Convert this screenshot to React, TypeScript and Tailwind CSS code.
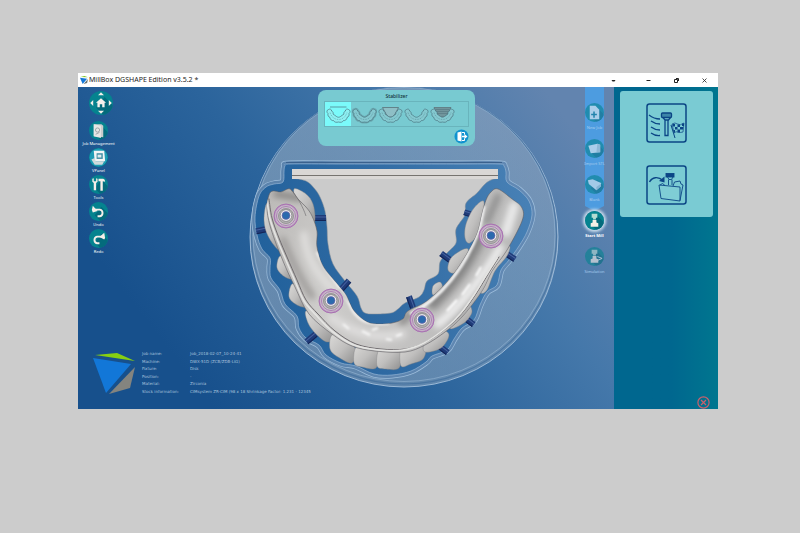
import type { ReactNode } from "react";

type Point = [number, number];

/** Smooth closed or open curve through a list of points (Catmull-Rom). */
function curve(points: Point[], closed = true): string {
  const n = points.length;
  const at = (i: number): Point =>
    closed ? points[(i + n) % n] : points[Math.max(0, Math.min(n - 1, i))];
  let d = `M${points[0][0]} ${points[0][1]}`;
  const last = closed ? n : n - 1;
  for (let i = 0; i < last; i++) {
    const [a, b, c, e] = [at(i - 1), at(i), at(i + 1), at(i + 2)];
    d += `C${b[0] + (c[0] - a[0]) / 6} ${b[1] + (c[1] - a[1]) / 6} ${c[0] - (e[0] - b[0]) / 6} ${c[1] - (e[1] - b[1]) / 6} ${c[0]} ${c[1]}`;
  }
  return closed ? d + "Z" : d;
}

const pocket = curve([
  [284, 171], [285, 166], [290, 164], [340, 164], [400, 164], [460, 164], [499, 164], [504, 166], [506, 172],
  [507, 182], [519, 190], [529, 201], [532, 215], [527, 232], [519, 246], [509, 260], [501, 270], [497, 285],
  [487, 292], [480, 305], [474, 320], [462, 328], [454, 339], [447, 350], [432, 356], [426, 362],
  [411, 371], [392, 375], [374, 374], [356, 366], [341, 363], [326, 355], [319, 345], [306, 338], [299, 328],
  [297, 316], [285, 304], [280, 290], [271, 278], [270, 268], [270, 258], [262, 249], [257, 235],
  [255, 217], [259, 196], [266, 187], [274, 184], [283, 182],
]);

const plate =
  "M292 178" +
  curve([
    [292, 178], [306, 181], [314, 188], [320, 197], [325, 211], [327, 227], [328, 244], [333, 264], [345, 281], [357, 296],
    [361, 308], [365, 313], [374, 314], [391, 313], [398, 309], [405, 303], [419, 297], [424, 290],
    [427, 281], [438, 274], [440, 262], [447, 253], [456, 243], [456, 229], [465, 215], [466, 203],
    [477, 193], [485, 184], [491, 180], [498, 178],
  ], false).replace(/^M/, "L") +
  "Z";

const arch = curve([
  [269, 195], [273, 191], [281, 192], [290, 189], [298, 199], [306, 207], [312, 216], [317, 231], [317, 247], [323, 266],
  [338, 285], [346, 295], [354, 311], [367, 322], [380, 324], [392, 323], [403, 319], [408, 311], [427, 301],
  [448, 281], [465, 257], [477, 234], [482, 214], [486, 200], [491, 192], [498, 189], [512, 199], [522, 208],
  [522, 221], [507, 250], [492, 271], [482, 291], [462, 317], [445, 332], [425, 345], [405, 352],
  [375, 351], [352, 346], [332, 334], [309, 314], [295, 287], [283, 261], [271, 229], [267, 209],
]);

const ridge = curve([
  [268, 199], [271, 218], [278, 238], [286, 257], [296, 280], [305, 300], [317, 314], [334, 331], [355, 344],
  [380, 349], [404, 349], [425, 342], [448, 326], [462, 312], [475, 294], [486, 276], [498, 257],
], false);

const teeth: Point[][] = [
  [[294, 189], [306, 194], [313, 204], [315, 219], [311, 225], [298, 205]],
  [[267, 203], [264, 220], [268, 236], [279, 250], [284, 240], [275, 210]],
  [[280, 256], [277, 268], [285, 277], [293, 278], [288, 262]],
  [[292, 284], [289, 297], [297, 305], [306, 306], [300, 290]],
  [[306, 311], [308, 323], [316, 334], [327, 342], [335, 336], [320, 318]],
  [[332, 335], [330, 349], [338, 357], [352, 363], [356, 350], [345, 338]],
  [[356, 347], [354, 363], [362, 367], [376, 368], [379, 352], [368, 344]],
  [[379, 349], [377, 366], [386, 369], [399, 368], [401, 352], [390, 345]],
  [[401, 348], [401, 366], [411, 364], [423, 359], [425, 348], [412, 342]],
  [[425, 342], [425, 352], [441, 348], [449, 335], [440, 330]],
  [[450, 328], [464, 323], [472, 312], [466, 305]],
  [[481, 291], [487, 290], [495, 271], [507, 256], [509, 246], [492, 262]],
  [[484, 202], [474, 208], [466, 224], [465, 238], [470, 243], [480, 230]],
  [[464, 249], [451, 258], [448, 270], [456, 272], [468, 252]],
  [[440, 282], [433, 286], [433, 295], [442, 288]],
];

const pins: [number, number, number][] = [
  [262, 230, -12], [320, 218, 0], [470, 214, 17], [446, 257, 36], [510, 256, 34],
  [345, 285, -48], [311, 338, -40], [411, 302, 70], [469, 321, 38], [443, 349, 38],
];

const implants: Point[] = [[286, 216], [331, 301], [422, 320], [491, 236]];

function ModelCanvas() {
  return (
    <svg className="absolute inset-0 h-full w-full" viewBox="78 87 536 322" role="img" aria-label="Milling disc with denture">
      <defs>
        <linearGradient id="sky" gradientUnits="userSpaceOnUse" x1="200" y1="390" x2="560" y2="110">
          <stop offset="0" stopColor="#17508c" />
          <stop offset="0.4" stopColor="#2b649c" />
          <stop offset="0.72" stopColor="#4578aa" />
          <stop offset="1" stopColor="#6284af" />
        </linearGradient>
        <linearGradient id="pocketFill" gradientUnits="userSpaceOnUse" x1="255" y1="300" x2="535" y2="240">
          <stop offset="0" stopColor="#20609b" />
          <stop offset="0.5" stopColor="#326ca4" />
          <stop offset="1" stopColor="#4780b5" />
        </linearGradient>
        <linearGradient id="disc" gradientUnits="userSpaceOnUse" x1="250" y1="240" x2="558" y2="230">
          <stop offset="0" stopColor="#c3c9d0" stopOpacity="0.42" />
          <stop offset="1" stopColor="#c3c9d0" stopOpacity="0.28" />
        </linearGradient>
        <linearGradient id="rim" gradientUnits="userSpaceOnUse" x1="255" y1="240" x2="535" y2="230">
          <stop offset="0" stopColor="#5b83ac" />
          <stop offset="1" stopColor="#6289b4" />
        </linearGradient>
        <linearGradient id="tooth" x1="0" y1="0" x2="1" y2="1">
          <stop offset="0" stopColor="#dbdad8" />
          <stop offset="0.5" stopColor="#c0bfbe" />
          <stop offset="1" stopColor="#8e8e8e" />
        </linearGradient>
        <linearGradient id="gum" gradientUnits="userSpaceOnUse" x1="270" y1="200" x2="520" y2="290">
          <stop offset="0" stopColor="#bdbbb9" />
          <stop offset="0.3" stopColor="#cdccca" />
          <stop offset="0.6" stopColor="#c6c5c4" />
          <stop offset="1" stopColor="#b4b4b4" />
        </linearGradient>
        <filter id="soft" x="-20%" y="-20%" width="140%" height="140%">
          <feGaussianBlur stdDeviation="3" />
        </filter>
        <filter id="fine" x="-20%" y="-20%" width="140%" height="140%">
          <feGaussianBlur stdDeviation="1" />
        </filter>
        <clipPath id="archClip">
          <path d={arch} />
        </clipPath>
      </defs>

      <rect x="-400" y="87" width="1400" height="322" fill="url(#sky)" />
      <ellipse cx="404" cy="237" rx="154" ry="150" fill="url(#disc)" stroke="#a7c2dc" strokeWidth="0.9" />
      <ellipse cx="404" cy="235.500" rx="152.500" ry="148.500" fill="none" stroke="#44719f" strokeOpacity="0.8" strokeWidth="1.200" />
      <ellipse cx="404" cy="234.500" rx="151" ry="147" fill="none" stroke="#8fb0d0" strokeWidth="0.7" />

      <path d={pocket} fill="none" stroke="#9dbddb" strokeWidth="7" />
      <path d={pocket} fill="none" stroke="url(#rim)" strokeWidth="5.600" />
      <path d={pocket} fill="url(#pocketFill)" stroke="#93b5d5" strokeWidth="0.7" />
      <path d="M286 162.500H502" stroke="#3b618d" strokeWidth="1" />

      <path d={plate} fill="#cbcbcb" stroke="#8d9097" strokeWidth="0.5" />
      <rect x="292" y="169" width="206" height="10" fill="#dad7d5" />
      <path d="M292 175.500H498" stroke="#77736f" strokeWidth="1" />

      {pins.map(([x, y, r]) => (
        <g key={`${x}-${y}`} transform={`translate(${x} ${y}) rotate(${r})`}>
          <rect x="-6" y="-3" width="12" height="6" fill="#1f3b78" />
          <path d="M-6 -1H6" stroke="#4763a0" strokeWidth="1" />
          <path d="M-6 2.500H6" stroke="#132457" strokeWidth="1" />
        </g>
      ))}

      {teeth.map((t, i) => (
        <path key={i} d={curve(t)} fill="url(#tooth)" stroke="#7f7f82" strokeWidth="0.4" />
      ))}
      <path d={arch} fill="url(#gum)" stroke="#5d5a60" strokeWidth="0.6" />
      <g clipPath="url(#archClip)" fill="none" strokeLinecap="round">
        <g filter="url(#soft)">
          <path d="M283 240C292 262 302 282 312 296" stroke="#a09e9c" strokeWidth="7" />
          <path d="M276 194L300 198" stroke="#858381" strokeWidth="6" />
          <path d="M304 235C306 258 318 276 334 290" stroke="#dedddb" strokeWidth="8" />
          <path d="M332 318C360 338 385 338 402 334" stroke="#dddcdb" strokeWidth="9" />
          <path d="M433 304C454 284 470 260 481 236" stroke="#858585" strokeWidth="11" />
          <path d="M438 324C456 310 478 284 500 248" stroke="#f0f0f0" strokeWidth="8" />
          <path d="M498 196L487 222" stroke="#8b8b8b" strokeWidth="6" />
          <path d="M490 280C480 298 468 312 452 326" stroke="#a5a5a5" strokeWidth="5" />
          <path d="M514 206L506 232" stroke="#eaeaea" strokeWidth="10" />
          <path d="M402 322L412 312" stroke="#8c8a89" strokeWidth="7" />
        </g>
        <g filter="url(#fine)" strokeLinecap="butt">
          <path d="M343 324L349 329M386 339L392 340M396 336L402 334M362 331L370 335M372 330L378 328" stroke="#f6f6f6" strokeWidth="2" />
          <path d="M447 311L457 300M462 295L470 284M476 276L481 267" stroke="#fff" strokeWidth="2" />
          <path d="M410 314C440 300 466 266 479 230L484 206" stroke="#f6f6f6" strokeWidth="3" />
          <path d="M317 252C326 272 342 288 350 305C356 320 366 325 389 323" stroke="#efeeed" strokeWidth="3" />
          <path d="M339 289L346 298L350 302" stroke="#8f8b8a" strokeWidth="1" />
        </g>
        <path d={ridge} stroke="#6f6b6e" strokeWidth="1" transform="translate(1 0)" />
        <path d={ridge} stroke="#e4e4e2" strokeWidth="1.600" transform="translate(-1 1)" />
      </g>
      <path d="M291 190C297 196 303 207 306 216" fill="none" stroke="#6a686b" strokeWidth="0.6" />

      {implants.map(([x, y]) => (
        <g key={x} transform={`translate(${x} ${y})`}>
          <circle r="11.500" fill="#c9c4c8" stroke="#bb8fc2" strokeWidth="1.500" />
          <circle r="12" fill="none" stroke="#93559f" strokeWidth="0.5" />
          <circle r="9.500" fill="none" stroke="#a46db0" strokeWidth="0.8" />
          <circle r="7.500" fill="#b3b1b3" stroke="#8d8a8d" strokeWidth="0.8" />
          <circle cy="-0.500" r="5.800" fill="#f4f4f4" stroke="#6f6c70" strokeWidth="0.6" />
          <circle cy="-0.500" r="4" fill="#2b6aae" stroke="#7b62a4" strokeWidth="0.6" />
        </g>
      ))}
    </svg>
  );
}

function Disc({ id, children }: { id: string; children: ReactNode }) {
  return (
    <svg className="block h-full w-full" viewBox="0 0 20 20" aria-hidden="true">
      <defs>
        <clipPath id={id}>
          <circle cx="10" cy="10" r="10" />
        </clipPath>
      </defs>
      <circle cx="10" cy="10" r="10" fill="#05838f" />
      <path d="M6 14L13 5L24 16L16 24Z" fill="#046b7c" clipPath={`url(#${id})`} />
      {children}
    </svg>
  );
}

const leftTools: { label: string; icon: ReactNode }[] = [
  {
    label: "Job Management",
    icon: (
      <Disc id="c-job">
        <path d="M5 3.500H13L15 5V17L5 16Z" fill="#c9cdcd" />
        <path d="M5 3.500L12.500 5V18L5 16Z" fill="#e6e7e5" />
        <circle cx="9" cy="9.500" r="2.200" fill="none" stroke="#9aa2a4" />
        <path d="M7 14L11 12" stroke="#9aa2a4" />
      </Disc>
    ),
  },
  {
    label: "VPanel",
    icon: (
      <Disc id="c-panel">
        <circle cx="10" cy="10" r="9.500" fill="#1d9bb5" />
        <path d="M5 3H16L17 14H6Z" fill="#f2f5f5" />
        <path d="M8 5.500H14.500V11.500H8Z" fill="#3f8ea3" />
        <path d="M9 7H13V10H9Z" fill="#dcebee" />
        <path d="M2.500 12L6 10.500L7 14H16L14 17.500H6Z" fill="#cfdadb" />
      </Disc>
    ),
  },
  {
    label: "Tools",
    icon: (
      <Disc id="c-tools">
        <path d="M3.500 4V7L5 8.500V16H7.500V8.500L9 7V4L7.500 3.500V6.500H5V3.500Z" fill="#f5efe9" />
        <path d="M10 4H15Q17 4.500 17 7L14.500 6.500V16.500H12V6.500H10Z" fill="#f5efe9" />
      </Disc>
    ),
  },
  {
    label: "Undo",
    icon: (
      <Disc id="c-undo">
        <path d="M6 8H11.500A3.600 3.600 0 0 1 11.500 15H9" fill="none" stroke="#f5efe9" strokeWidth="2" />
        <path d="M3 8.500L4 4L9 9.500L4 11Z" fill="#f5efe9" />
      </Disc>
    ),
  },
  {
    label: "Redo",
    icon: (
      <Disc id="c-redo">
        <path d="M14 8H8.500A3.600 3.600 0 0 0 8.500 15H11" fill="none" stroke="#f5efe9" strokeWidth="2" />
        <path d="M17 9.500L16 4L11 8.500L16 11Z" fill="#f5efe9" />
      </Disc>
    ),
  },
];

function LeftToolbar() {
  return (
    <nav aria-label="Main tools" className="flex w-[41px] flex-col items-center pt-1">
      <button type="button" aria-label="Home view" className="ml-1 size-6">
        <Disc id="c-home">
          <path d="M10 6L5.800 9.800H7V13.500H9V11H11V13.500H13V9.800H14.200Z" fill="#f5f1ec" />
          <path d="M10 1L12.500 3.500H7.500ZM10 19L12.500 16.500H7.500ZM1 10L3.500 7.500V12.500ZM19 10L16.500 7.500V12.500Z" fill="#f1efea" />
        </Disc>
      </button>
      <div className="mt-1.5 flex flex-col items-center">
        {leftTools.map((t) => (
          <button key={t.label} type="button" className="flex h-[27px] flex-col items-center">
            <span className="block size-[19px]">{t.icon}</span>
            <span className="text-[4px] leading-[8px] whitespace-nowrap text-white">{t.label}</span>
          </button>
        ))}
      </div>
    </nav>
  );
}

const mill = (
  <>
    <path d="M7 3H13V7H11.500V9H8.500V7H7Z" fill="#b4dcd2" />
    <path d="M8 9.500H12V12L14 13V16.500H6V13L8 12Z" fill="#f4efe6" />
  </>
);

const steps: { label: string; dim: boolean; active?: boolean; icon: ReactNode }[] = [
  {
    label: "New Job",
    dim: true,
    icon: (
      <Disc id="c-new">
        <path d="M5 3H11L15 7V17H5Z" fill="#e8f0f2" />
        <path d="M9.500 9V15.500M6.500 12.200H12.500" stroke="#05738a" strokeWidth="1.600" />
      </Disc>
    ),
  },
  {
    label: "Import STL",
    dim: true,
    icon: (
      <Disc id="c-import">
        <path d="M3.500 7L13 5L16 6V14L6 15Z" fill="#e8f0f2" />
        <path d="M13 5L12 14L16 14V6Z" fill="#b9ccd0" />
      </Disc>
    ),
  },
  {
    label: "Blank",
    dim: true,
    icon: (
      <Disc id="c-blank">
        <path d="M3 5.500L8 4.500L17 8.500L16.500 12L12 16L4 9.500Z" fill="#dce9ee" />
        <path d="M17 9L12 12.500V16L16.500 12Z" fill="#a9c2cc" />
      </Disc>
    ),
  },
  { label: "Start Mill", dim: false, active: true, icon: <Disc id="c-mill">{mill}</Disc> },
  {
    label: "Simulation",
    dim: true,
    icon: (
      <Disc id="c-sim">
        {mill}
        <path d="M13 10L18 12L13.500 14" fill="none" stroke="#e8f0f2" />
      </Disc>
    ),
  },
];

function WorkflowBar() {
  return (
    <nav aria-label="Workflow" className="relative mr-[10px] ml-auto w-[19px]">
      <svg className="absolute inset-x-0 top-0 h-[124px] w-full" viewBox="0 0 19 124" preserveAspectRatio="none" aria-hidden="true">
        <path d="M0 0H19V119L9.500 124L0 119Z" fill="#4b9fe5" opacity="0.9" />
      </svg>
      <div className="relative flex flex-col items-center pt-4">
        {steps.map((s) => (
          <button key={s.label} type="button" className="flex h-9 flex-col items-center">
            <span
              className={`block size-[19px] shrink-0 rounded-full ${s.dim ? "opacity-60" : ""} ${
                s.active ? "shadow-[0_0_3px_2px_#c9dcec]" : ""
              }`}
            >
              {s.icon}
            </span>
            <span
              className={`mt-[3px] text-[4px] leading-[6px] whitespace-nowrap ${
                s.active ? "font-bold text-white" : "text-[#a9cdee]"
              }`}
            >
              {s.label}
            </span>
          </button>
        ))}
      </div>
    </nav>
  );
}

const archOutline =
  "M2.500 5.500C0.500 6 0.500 8.500 2 9.500C1.500 11.500 2.500 13 4 13.500C4 15.500 6 17 7.500 16.500C8.500 18.500 10.500 18.500 12.500 18C14.500 18.500 16.500 18.500 17.500 16.500C19 17 21 15.500 21 13.500C22.500 13 23.500 11.500 23 9.500C24.500 8.500 24.500 6 22.500 5.500C21 4.500 19 5.500 19.500 7C18 7.500 17.500 9 18 10C16.500 10.500 16 12 14.500 12.500C13 13.500 12 13.500 10.500 12.500C9 12 8.500 10.500 7 10C7.500 9 7 7.500 5.500 7C6 5.500 4 4.500 2.500 5.500Z";

function ArchIcon({ kind }: { kind: number }) {
  return (
    <svg className="block h-5 w-[25px]" viewBox="0 0 25 20" fill="none" stroke="#4b7480" strokeWidth="0.7" aria-hidden="true">
      {kind === 1 && <path d={archOutline} stroke="#6aaab2" strokeWidth="2.500" />}
      {kind === 2 && <path d="M4.500 3.500H20.500L17 10L14.500 13H10.500L8 10Z" fill="#8ebfc6" stroke="#54666e" />}
      {kind === 4 && (
        <>
          <path d="M4 3.500H21L17 11L14.500 13H10.500L8 11Z" fill="#71959c" stroke="#5b6f76" />
          <path d="M5 5.500H20M6 7.500H19M7 9.500H18" stroke="#557680" strokeWidth="0.6" />
        </>
      )}
      {kind === 0 && <path d="M4 3H20.500" />}
      <path d={archOutline} fill={kind === 0 ? "#8df0f2" : "#84c9d0"} />
      <path d="M4 8.500C5 12 8 15.500 12.500 15.500S20 12 21 8.500" strokeDasharray="1.500 1" strokeWidth="0.4" />
    </svg>
  );
}

const arches = ["Bar", "Offset", "Plate", "Open", "Grid"];

function StabilizerPopup() {
  return (
    <section
      aria-label="Stabilizer"
      className="absolute top-[3px] left-[240px] flex w-[157px] flex-col rounded-lg bg-[#78cad1] px-1.5 pt-1 pb-0.5"
    >
      <h2 className="text-center text-[5px] leading-[5px] font-medium text-[#123038]">Stabilizer</h2>
      <div className="mt-0.5 flex h-[26px] border border-[#69b4bc]">
        {arches.map((a, i) => (
          <button
            key={a}
            type="button"
            aria-label={a}
            className={`flex w-[26px] items-center justify-center ${i === 0 ? "bg-[#7bfafa]" : ""}`}
          >
            <ArchIcon kind={i} />
          </button>
        ))}
      </div>
      <button type="button" aria-label="Exit" className="mt-0.5 size-[15px] self-end">
        <svg className="block size-full" viewBox="0 0 15 15" aria-hidden="true">
          <circle cx="7.500" cy="7.500" r="7" fill="#1193cf" />
          <path d="M3.500 3.500L7.500 2.500V12.500L3.500 11.500Z" fill="#fff" />
          <path d="M8 3.500H10.500V5.500M10.500 9.500V11.500H8" fill="none" stroke="#fff" />
          <path d="M8 6.700H10.500V5L13.500 7.500L10.500 10V8.300H8Z" fill="#fff" />
        </svg>
      </button>
    </section>
  );
}

const info: [string, string][] = [
  ["Job name:", "Job_2018-02-07_10-24-41"],
  ["Machine:", "DWX-51D (ZCB/ZDB-LIG)"],
  ["Fixture:", "Disk"],
  ["Position:", "-"],
  ["Material:", "Zirconia"],
  ["Stock information:", "CIMsystem ZR-CIM (98 x 18 Shrinkage Factor: 1.231 - 12345"],
];

function JobInfo() {
  return (
    <div className="absolute bottom-[14px] left-[15px] flex items-center gap-[5px]">
      <svg className="mt-px h-[43px] w-11" viewBox="0 0 44 43" role="img" aria-label="MillBox">
        <path d="M2 3L24 1L42 9Z" fill="#86cf12" />
        <path d="M0 6L38 12L13 41Z" fill="#1277d8" />
        <path d="M42 15L37 36L16 42Z" fill="#84847f" />
      </svg>
      <dl className="grid h-[45px] grid-cols-[48px_auto] content-between font-['DejaVu_Sans',sans-serif] text-[4px] leading-[7px] text-[#a9c3de]">
        {info.map(([k, v]) => (
          <div key={k} className="contents">
            <dt>{k}</dt>
            <dd className="whitespace-nowrap">{v}</dd>
          </div>
        ))}
      </dl>
    </div>
  );
}

function MillNowIcon() {
  return (
    <svg className="block h-10 w-[41px]" viewBox="0 0 41 40" fill="none" stroke="#0b4585" strokeWidth="1.300" aria-hidden="true">
      <rect x="1" y="1" width="39" height="38" rx="2.500" strokeWidth="1.500" />
      <path d="M3 12Q8 16 14 16M5 18Q9 21 14 21M5 24Q9 27 14 27M5 30Q9 33 14 32.500" />
      <rect x="15.500" y="10" width="10" height="4.500" rx="1" fill="#3d86a8" />
      <path d="M17 14.500L19 17H22.500L24.500 14.500M19 17V32.500H22V17" />
      <path d="M25 22L29 35" strokeWidth="1" />
      <path d="M26 21Q29 19 31.500 21T38 20L37 29Q34 30 32 29T28 30Z" strokeWidth="0.7" />
      <path
        d="M26.500 21H29V23.500H27ZM31.500 21.500H34V24H31.500ZM29 24H31.500V26.500H29ZM34 24H37V26.500H34ZM31.500 26.500H34V29.500H31.500ZM27.500 27H29V29.500H28ZM36 20.500H38V23H36Z"
        fill="#0b4585"
        stroke="none"
      />
    </svg>
  );
}

function SaveMillIcon() {
  return (
    <svg className="block h-10 w-[41px]" viewBox="0 0 41 40" fill="none" stroke="#0b4585" strokeWidth="0.900" aria-hidden="true">
      <rect x="1" y="1" width="39" height="38" rx="2.500" strokeWidth="1.500" />
      <path d="M3.500 17C6 12 12 11 17 15.500" strokeWidth="1.400" />
      <path d="M18.500 11.500V17.500L13 16Z" fill="#0b4585" stroke="none" />
      <rect x="20" y="8.500" width="8" height="3.500" fill="#0b4585" />
      <path d="M21.500 12L23 14.500H25.500L27 12M22.500 14.500V20M26 14.500V20" />
      <path d="M13 20L34 22V36L15 33.500Z" fill="#7fcdd5" />
      <path d="M14 20L16.500 18.500L19 20.500M27 21L28.500 17L34 16L35 19L37 20L34 35.500" />
    </svg>
  );
}

function SidePanel() {
  return (
    <aside className="flex w-[104px] flex-col justify-between bg-linear-to-r from-[#00678f] from-55% to-[#00768f] pt-1 pr-[5px] pl-1.5">
      <div className="flex h-[126px] flex-col items-center justify-center gap-[22px] rounded-[3px] bg-[#7acbd3]">
        <button type="button" aria-label="Mill now">
          <MillNowIcon />
        </button>
        <button type="button" aria-label="Save to folder">
          <SaveMillIcon />
        </button>
      </div>
      <button type="button" aria-label="Cancel" className="mr-[3px] size-[13px] self-end">
        <svg className="block size-full" viewBox="0 0 13 13" fill="none" stroke="#c9606c" strokeWidth="1.200" aria-hidden="true">
          <circle cx="6.500" cy="6.500" r="5.600" />
          <path d="M4 4L9 9M9 4L4 9" />
        </svg>
      </button>
    </aside>
  );
}

function TitleBar() {
  return (
    <header className="flex h-[14px] items-center bg-white pr-[10px] pl-0.5">
      <svg className="size-2" viewBox="0 0 9 9" aria-hidden="true">
        <path d="M0.500 1L5 0L9 1.500Z" fill="#7cc41c" />
        <path d="M0 2L8 3L3 9Z" fill="#1277d8" />
        <path d="M9 3.500L8 8L4 9Z" fill="#64706f" />
      </svg>
      <h1 className="ml-px text-[7px] leading-[14px] whitespace-nowrap text-[#1c1c1c]">
        MillBox DGSHAPE Edition v3.5.2 *
      </h1>
      <div className="ml-auto flex items-center text-[#222]">
        <button type="button" aria-label="Collapse" className="mr-7 size-[7px]">
          <svg className="block size-full" viewBox="0 0 7 7" aria-hidden="true">
            <path d="M1.500 3H5.500L4.500 4.500H2.500Z" fill="currentColor" />
          </svg>
        </button>
        <div className="flex gap-[21px]">
          <button type="button" aria-label="Minimize" className="size-[7px]">
            <svg className="block size-full" viewBox="0 0 7 7" aria-hidden="true">
              <path d="M1.500 3.500H5.500" stroke="currentColor" />
            </svg>
          </button>
          <button type="button" aria-label="Restore" className="size-[7px]">
            <svg className="block size-full" viewBox="0 0 7 7" fill="none" stroke="currentColor" aria-hidden="true">
              <path d="M1.500 2.500H4.500V5.500H1.500ZM3 1.500H5.500V4" />
            </svg>
          </button>
          <button type="button" aria-label="Close" className="size-[7px]">
            <svg className="block size-full" viewBox="0 0 7 7" stroke="currentColor" aria-hidden="true">
              <path d="M1.500 1.500L5.500 5.500M5.500 1.500L1.500 5.500" strokeWidth="0.8" />
            </svg>
          </button>
        </div>
      </div>
    </header>
  );
}

export default function App() {
  return (
    <div className="min-h-screen bg-[#cccccc] pt-[73px] pr-[82px] pb-8 pl-[78px] font-['Noto_Sans','Open_Sans',sans-serif]">
      <div className="flex flex-col">
        <TitleBar />
        <main className="flex h-[322px]">
          <div className="relative flex-1 overflow-hidden bg-[#215792]">
            <ModelCanvas />
            <div className="relative flex h-full">
              <LeftToolbar />
              <WorkflowBar />
            </div>
            <StabilizerPopup />
            <JobInfo />
          </div>
          <SidePanel />
        </main>
      </div>
    </div>
  );
}
